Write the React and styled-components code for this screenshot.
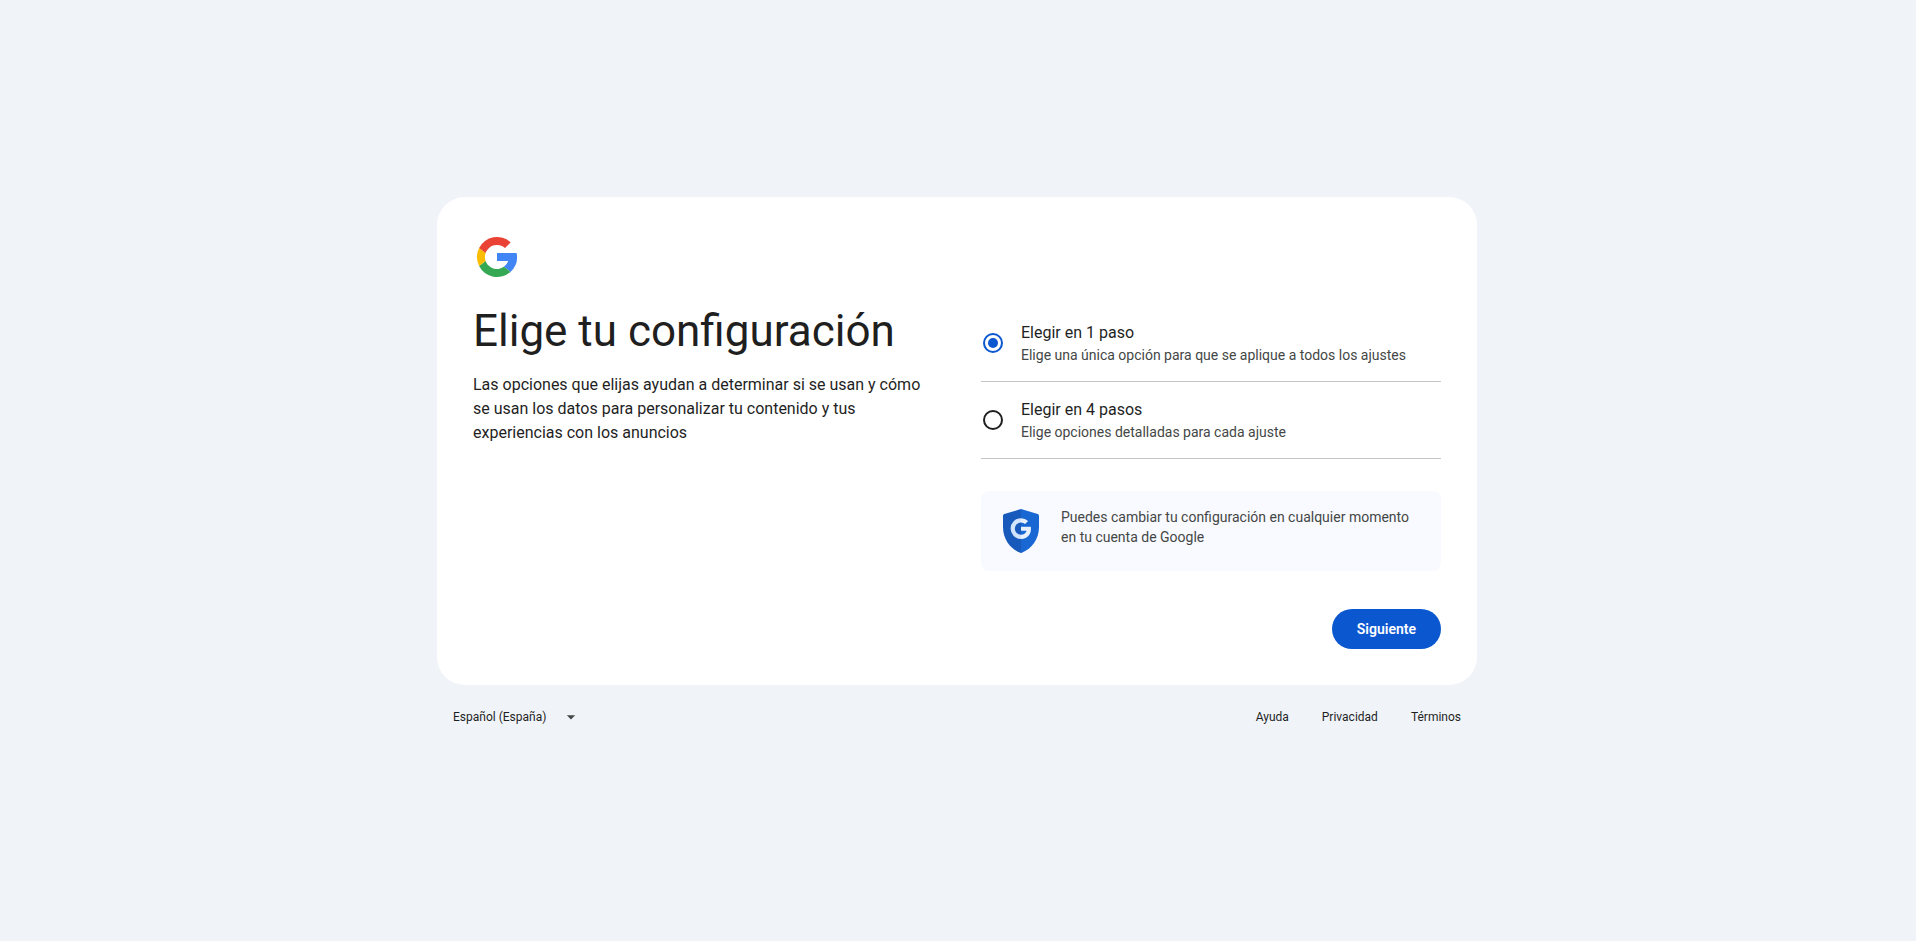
import React, { useState } from 'react';
import styled, { createGlobalStyle } from 'styled-components';


const GlobalStyle = createGlobalStyle`
    * {
        box-sizing: border-box;
    }

    body {
        margin: 0;
        background: #f0f4f9;
        color: #1f1f1f;
        font-family: Roboto, "Liberation Sans", sans-serif;
        font-size: 16px;
        line-height: 24px;
    }
`;

const Page = styled.div`
    min-height: 100vh;
    padding: 0 2px 3px 0;
    display: flex;
    flex-direction: column;
    align-items: center;
    justify-content: center;
`;

const Card = styled.main`
    width: 100%;
    max-width: 1040px;
    padding: 36px;
    border-radius: 28px;
    background: #ffffff;

    svg {
        display: block;
    }
`;

const Columns = styled.form`
    margin-top: 24px;
    display: grid;
    grid-template-columns: 1fr 1fr;
    column-gap: 48px;
`;

const Title = styled.h1`
    margin: 0 0 16px;
    font-weight: 400;
    font-size: 44px;
    line-height: 52px;
`;

const Intro = styled.p`
    margin: 0;
`;

const Options = styled.fieldset`
    margin: 0 0 32px;
    padding: 0;
    border: none;
    min-width: 0;
`;

const Option = styled.label`
    padding: 16px 0;
    border-bottom: 1px solid #c4c7c5;
    display: flex;
    align-items: center;
    gap: 18px;
    cursor: pointer;
`;

const Radio = styled.input`
    appearance: none;
    flex: none;
    width: 20px;
    height: 20px;
    margin: 0 0 0 2px;
    border: 2px solid #1f1f1f;
    border-radius: 50%;
    display: grid;
    place-items: center;
    cursor: pointer;

    &:checked {
        border-color: #0b57d0;
    }

    &:checked::before {
        content: '';
        width: 10px;
        height: 10px;
        border-radius: 50%;
        background: #0b57d0;
    }
`;

const OptionText = styled.span`
    display: flex;
    flex-direction: column;
`;

const Hint = styled.span`
    font-size: 14px;
    line-height: 20px;
    color: #444746;
`;

const Notice = styled.div`
    padding: 16px;
    border-radius: 8px;
    background: #f9faff;
    display: flex;
    gap: 16px;

    svg {
        flex: none;
    }
`;

const Actions = styled.div`
    margin-top: 38px;
    display: flex;
    justify-content: flex-end;
`;

const Button = styled.button`
    height: 40px;
    padding: 0 25px;
    border: none;
    border-radius: 20px;
    background: #0b57d0;
    color: #ffffff;
    font-family: inherit;
    font-weight: 600;
    font-size: 14px;
    line-height: 20px;
    cursor: pointer;
`;

const Footer = styled.footer`
    width: 100%;
    max-width: 1040px;
    padding: 8px 16px 0;
    display: flex;
    align-items: center;
    justify-content: space-between;
    font-size: 12px;
    line-height: 16px;
`;

const Language = styled.div`
    display: grid;
    align-items: center;

    select, svg {
        grid-area: 1 / 1;
    }

    svg {
        justify-self: end;
        pointer-events: none;
    }
`;

const Select = styled.select`
    appearance: none;
    width: 128px;
    height: 48px;
    padding: 0;
    border: none;
    background: transparent;
    color: #1f1f1f;
    font: inherit;
    cursor: pointer;
`;

const Links = styled.nav`
    display: flex;
    gap: 33px;

    a {
        padding: 16px 0;
        color: #1f1f1f;
        text-decoration: none;
    }
`;

const GoogleLogo = () => (
    <svg width="48" height="48" viewBox="0 0 48 48" role="img" aria-label="Google">
        <path fill="#4285F4" d="M24 20H43.6A20 20 0 0 1 37.4 38.9L30.9 33.8A12 12 0 0 0 35.3 28H24z" />
        <path fill="#34A853" d="M37.4 38.9A20 20 0 0 1 6.1 32.9L12.6 27.9A12 12 0 0 0 30.9 33.8z" />
        <path fill="#FBBC04" d="M6.1 32.9A20 20 0 0 1 6.1 15.1L12.6 20.1A12 12 0 0 0 12.6 27.9z" />
        <path fill="#EA4335" d="M6.1 15.1A20 20 0 0 1 37.6 9.4L32 15A12 12 0 0 0 12.6 20.1z" />
    </svg>
);

const Shield = () => (
    <svg width="48" height="48" viewBox="0 0 48 48" aria-hidden="true">
        <path fill="#185ABC" d="M24 2L7.3 6.9Q6 7.4 6 8.8V20C6 32.5 13.5 41.5 22.6 45.6Q23.3 46 24 46z" />
        <path fill="#1967D2" d="M24 2L40.7 6.9Q42 7.4 42 8.8V20C42 32.5 34.5 41.5 25.4 45.6Q24.7 46 24 46z" />
        <path fill="#D2E3FC" d="M24 11.2A10.4 10.4 0 0 0 24 32V27.8A6.2 6.2 0 0 1 24 15.4z" />
        <path fill="#E8F0FE" d="M24 11.2Q28.2 11.3 31.1 14.1L28.1 17.1Q26.5 15.4 24 15.4z" />
        <path fill="#E8F0FE" d="M24 19.8H33.8C34.8 26.4 31.2 31.9 24 32V27.8Q28.3 27.6 29.6 23.8H24z" />
    </svg>
);

const Caret = () => (
    <svg width="20" height="20" viewBox="0 0 24 24" aria-hidden="true">
        <path fill="#444746" d="M7 10l5 5 5-5z" />
    </svg>
);

const options = [
    {
        id: 'express',
        title: 'Elegir en 1 paso',
        hint: 'Elige una única opción para que se aplique a todos los ajustes',
    },
    {
        id: 'manual',
        title: 'Elegir en 4 pasos',
        hint: 'Elige opciones detalladas para cada ajuste',
    },
];

const App = () => {
    const [selected, setSelected] = useState('express');

    return (
        <Page>
            <GlobalStyle />
            <Card>
                <GoogleLogo />
                <Columns onSubmit={(e) => e.preventDefault()}>
                    <div>
                        <Title>Elige tu configuración</Title>
                        <Intro>
                            Las opciones que elijas ayudan a determinar si se usan y cómo se usan los
                            datos para personalizar tu contenido y tus experiencias con los anuncios
                        </Intro>
                    </div>

                    <div>
                        <Options aria-label="Elige tu configuración">
                            {options.map(({ id, title, hint }) => (
                                <Option key={id} htmlFor={id}>
                                    <Radio
                                        type="radio"
                                        name="settings"
                                        id={id}
                                        checked={selected === id}
                                        onChange={() => setSelected(id)}
                                    />
                                    <OptionText>
                                        <span>{title}</span>
                                        <Hint>{hint}</Hint>
                                    </OptionText>
                                </Option>
                            ))}
                        </Options>

                        <Notice>
                            <Shield />
                            <Hint>
                                Puedes cambiar tu configuración en cualquier momento en tu cuenta de Google
                            </Hint>
                        </Notice>

                        <Actions>
                            <Button type="submit">Siguiente</Button>
                        </Actions>
                    </div>
                </Columns>
            </Card>

            <Footer>
                <Language>
                    <Select aria-label="Idioma" defaultValue="es-ES">
                        <option value="es-ES">Español (España)</option>
                    </Select>
                    <Caret />
                </Language>
                <Links>
                    <a href="#ayuda">Ayuda</a>
                    <a href="#privacidad">Privacidad</a>
                    <a href="#terminos">Términos</a>
                </Links>
            </Footer>
        </Page>
    );
};

export default App;
